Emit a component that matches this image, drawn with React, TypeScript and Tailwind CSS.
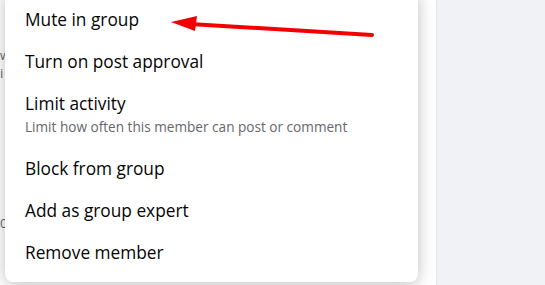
import React from 'react';

const items = [
  { label: 'Mute in group' },
  { label: 'Turn on post approval' },
  { label: 'Limit activity', sub: 'Limit how often this member can post or comment' },
  { label: 'Block from group' },
  { label: 'Add as group expert' },
  { label: 'Remove member' },
];

export default function App() {
  return (
    <div className="w-[545px] h-[285px] flex overflow-hidden bg-[#f0f2f5]" style={{ fontFamily: '"Segoe UI", "Open Sans", sans-serif' }}>
      <div className="relative w-[437px] h-full bg-white border-r border-[#e4e6eb] overflow-hidden">
        {/* page content behind the menu */}
        <div className="flex flex-col text-[13px] text-[#65676b] pt-[46px] leading-[18px]">
          <span>w</span>
          <span>i</span>
          <span className="mt-[132px]">0</span>
        </div>

        {/* dropdown menu */}
        <div className="absolute left-[5px] -top-[9px] w-[413px] bg-white rounded-lg shadow-[0_2px_16px_rgba(0,0,0,0.26)] pt-[8px] pb-[8px]">
          {items.map(it => it.sub ? (
            <div key={it.label} className="flex flex-col px-[20px] pt-[9px] pb-[12px]">
              <span className="text-[17.3px] leading-[24px] text-[#050505]">{it.label}</span>
              <span className="text-[13.6px] leading-[18px] text-[#65676b] mt-[2px]">{it.sub}</span>
            </div>
          ) : (
            <div key={it.label} className="flex items-center px-[20px] h-[42px]">
              <span className="text-[17.3px] leading-[24px] text-[#050505]">{it.label}</span>
            </div>
          ))}
        </div>

        {/* annotation arrow */}
        <svg className="absolute left-0 top-0" width="437" height="60" viewBox="0 0 437 60">
          <line x1="372" y1="35" x2="190" y2="24" stroke="#f20000" strokeWidth="4" strokeLinecap="round" />
          <polygon points="171,22 197,16 195,31" fill="#f20000" />
        </svg>
      </div>
    </div>
  );
}
